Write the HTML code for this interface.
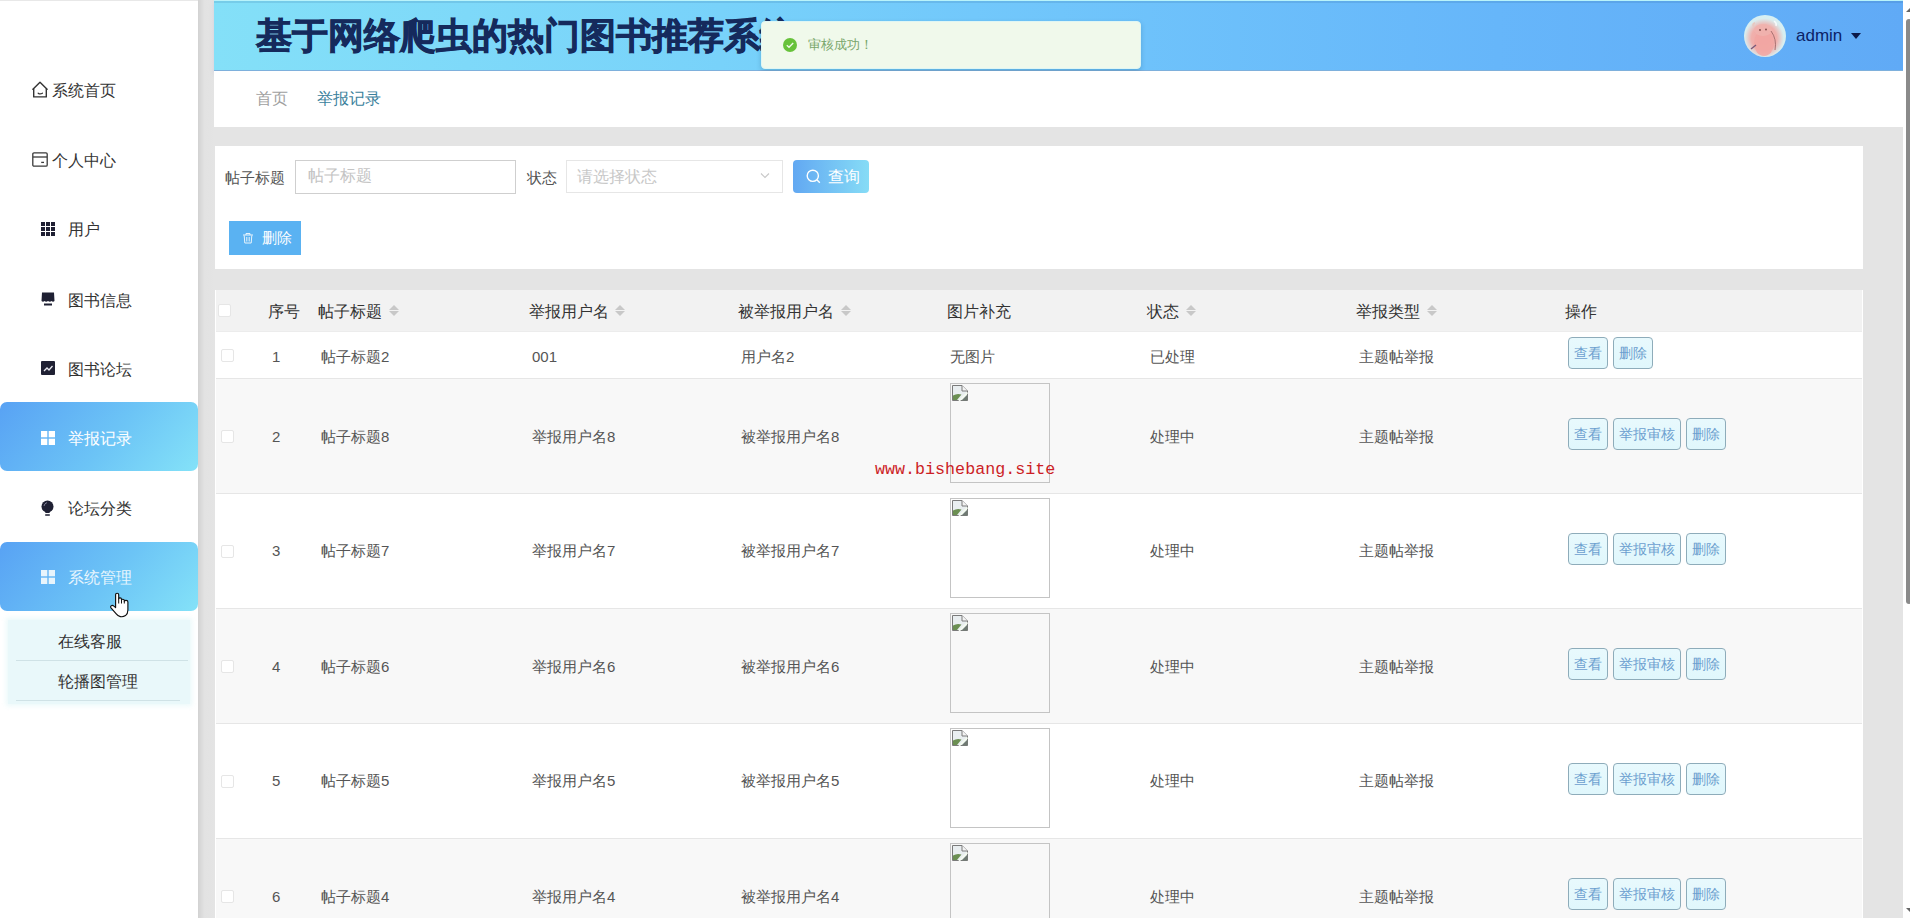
<!DOCTYPE html>
<html><head><meta charset="utf-8">
<style>
*{box-sizing:border-box;margin:0;padding:0}
html,body{width:1910px;height:918px;overflow:hidden;background:#e4e4e4;font-family:"Liberation Sans",sans-serif;color:#333}
.a{position:absolute;white-space:nowrap}
#side{position:absolute;left:0;top:0;width:198px;height:918px;background:#fff;border-top:1px solid #e8e8e8}
#gstrip{position:absolute;left:198px;top:0;width:16px;height:918px;background:linear-gradient(90deg,#d2d2d2,#e2e2e2 40%,#e4e4e4)}
.mi{position:absolute;left:0;width:198px;height:20px;font-size:16px;line-height:20px;color:#333}
.act{position:absolute;left:0;width:198px;height:69px;border-radius:7px;background:linear-gradient(130deg,#58a2f4 0%,#6cc4f6 55%,#84e2f8 100%)}
#header{position:absolute;left:214px;top:0;width:1689px;height:71px;background:linear-gradient(90deg,#84e0f8 0%,#78d2fa 30%,#72c8fb 45%,#66b6fa 76%,#60aaf6 100%);border-top:1px solid #b8f3fb;border-bottom:1px solid #7eb0dc;box-shadow:0 2px 4px rgba(150,150,220,.25)}
#crumb{position:absolute;left:214px;top:71px;width:1690px;height:56px;background:#fff}
.card{position:absolute;left:215px;width:1648px;background:#fff}
.th{position:absolute;top:303px;font-size:16px;line-height:18px;color:#333}
.td{position:absolute;font-size:15px;line-height:18px;color:#555}
.sort{position:absolute;width:10px;height:12px}
.sort:before{content:"";position:absolute;left:0;top:0;border-left:5px solid transparent;border-right:5px solid transparent;border-bottom:5px solid #c8c8c8}
.sort:after{content:"";position:absolute;left:0;top:6px;border-left:5px solid transparent;border-right:5px solid transparent;border-top:5px solid #c8c8c8}
.row{position:absolute;left:216px;width:1646px;border-bottom:1px solid #e6e6e6}
.cb{position:absolute;width:13px;height:13px;border:1px solid #e6e6e6;background:#fff;border-radius:2px}
.btn{position:absolute;height:32px;border:1px solid #8eacba;border-radius:4px;background:linear-gradient(180deg,#e8f9fd,#e0f7fc);font-size:14px;line-height:31px;color:#6c9fcf;text-align:center}
.img{position:absolute;width:100px;height:100px;border:1px solid #c4c4c4}
.bi{position:absolute;left:1px;top:1px;width:16px;height:16px}
</style></head><body>

<div id="side"></div>
<div id="gstrip"></div>

<!-- sidebar menu -->
<svg class="a" style="left:32px;top:81px" width="17" height="17" viewBox="0 0 17 17"><path d="M0.9 8.3 L8 1.2 L15.1 8.3" fill="none" stroke="#333" stroke-width="1.4" stroke-linejoin="round" stroke-linecap="round"/><path d="M1.7 7.6 V15.9 H14.3 V7.6" fill="none" stroke="#333" stroke-width="1.4" stroke-linejoin="round"/><path d="M6.2 12.2 Q8 13.6 10.4 12.2" fill="none" stroke="#333" stroke-width="1.3" stroke-linecap="round"/></svg>
<div class="a mi" style="left:52px;top:81px;width:auto">系统首页</div>

<svg class="a" style="left:32px;top:152px" width="16" height="15" viewBox="0 0 16 15"><rect x="0.8" y="0.8" width="14.4" height="13.4" rx="1.2" fill="none" stroke="#3a3a3a" stroke-width="1.3"/><line x1="1" y1="5" x2="15" y2="5" stroke="#3a3a3a" stroke-width="1.3"/><line x1="9.2" y1="10.4" x2="12" y2="10.4" stroke="#3a3a3a" stroke-width="1.3"/></svg>
<div class="a mi" style="left:52px;top:151px;width:auto">个人中心</div>

<svg class="a" style="left:41px;top:222px" width="14" height="14" viewBox="0 0 14 14" fill="#1f2033"><rect x="0" y="0" width="4" height="4"/><rect x="5" y="0" width="4" height="4"/><rect x="10" y="0" width="4" height="4"/><rect x="0" y="5" width="4" height="4"/><rect x="5" y="5" width="4" height="4"/><rect x="10" y="5" width="4" height="4"/><rect x="0" y="10" width="4" height="4"/><rect x="5" y="10" width="4" height="4"/><rect x="10" y="10" width="4" height="4"/></svg>
<div class="a mi" style="left:68px;top:220px;width:auto">用户</div>

<svg class="a" style="left:41px;top:292px" width="14" height="14" viewBox="0 0 14 14"><path d="M1 0.5 H13 L13.5 9 Q12 10.5 10.5 9 Q9 10.5 7 9 Q5 10.5 3.5 9 Q2 10.5 0.5 9 Z" fill="#1f2033"/><rect x="3" y="11.5" width="8" height="2" fill="#1f2033"/></svg>
<div class="a mi" style="left:68px;top:291px;width:auto">图书信息</div>

<svg class="a" style="left:41px;top:361px" width="14" height="14" viewBox="0 0 14 14"><rect x="0" y="0" width="14" height="14" rx="1" fill="#1f2033"/><path d="M3 10 L6 7 L8 9 L11.5 5" fill="none" stroke="#e8e8f0" stroke-width="1.3"/></svg>
<div class="a mi" style="left:68px;top:360px;width:auto">图书论坛</div>

<div class="act" style="top:402px"></div>
<svg class="a" style="left:41px;top:431px" width="14" height="14" viewBox="0 0 14 14" fill="#fff"><rect x="0" y="0" width="6.3" height="6.3"/><rect x="7.7" y="0" width="6.3" height="6.3"/><rect x="0" y="7.7" width="6.3" height="6.3"/><rect x="7.7" y="7.7" width="6.3" height="6.3"/></svg>
<div class="a mi" style="left:68px;top:429px;width:auto;color:#fff">举报记录</div>

<svg class="a" style="left:41px;top:500px" width="13" height="16" viewBox="0 0 13 16"><circle cx="6.5" cy="6.5" r="6" fill="#1f2033"/><path d="M3.5 10 L9.5 10 L8.5 13 L4.5 13 Z" fill="#1f2033"/><rect x="4" y="14.3" width="5" height="1.5" rx="0.7" fill="#1f2033"/><path d="M3 6 Q3.5 3.2 6 2.6" fill="none" stroke="#8a8aa0" stroke-width="0.9"/></svg>
<div class="a mi" style="left:68px;top:499px;width:auto">论坛分类</div>

<div class="act" style="top:542px"></div>
<svg class="a" style="left:41px;top:570px" width="14" height="14" viewBox="0 0 14 14" fill="#e8f4fc"><rect x="0" y="0" width="6.3" height="6.3"/><rect x="7.7" y="0" width="6.3" height="6.3"/><rect x="0" y="7.7" width="6.3" height="6.3"/><rect x="7.7" y="7.7" width="6.3" height="6.3"/></svg>
<div class="a mi" style="left:68px;top:568px;width:auto;color:#e8f6fd">系统管理</div>

<!-- submenu -->
<div class="a" style="left:8px;top:620px;width:182px;height:84px;background:#e9f8fa;box-shadow:0 0 5px 2px rgba(233,248,250,.9)"></div>
<div class="a mi" style="left:58px;top:632px;width:auto">在线客服</div>
<div class="a" style="left:16px;top:660px;width:172px;height:1px;background:#cfe2e6"></div>
<div class="a mi" style="left:58px;top:672px;width:auto">轮播图管理</div>
<div class="a" style="left:16px;top:700px;width:164px;height:1px;background:#cfe2e6"></div>

<!-- cursor -->
<svg class="a" style="left:110px;top:592px" width="20" height="26" viewBox="0 0 20 26"><path d="M5.6 2.7 Q5.6 1.2 7.15 1.2 Q8.7 1.2 8.7 2.7 V6.8 Q8.7 5.9 10.1 5.9 Q11.5 5.9 11.5 7.3 V8 Q11.5 7.2 12.9 7.2 Q14.3 7.2 14.3 8.6 V9.2 Q14.3 8.3 16.1 8.3 Q17.9 8.3 17.9 10.1 V18 Q17.9 21.8 15.5 23.6 Q13 25.2 10.3 24.6 Q7.8 24 6 21.6 L1 15.8 Q0.2 14.7 1.1 13.9 Q2.4 12.9 3.9 14.1 L5.6 15.6 Z" fill="#fff" stroke="#111" stroke-width="1.15" stroke-linejoin="round"/><line x1="8.7" y1="6.5" x2="8.7" y2="11.5" stroke="#111" stroke-width="1"/><line x1="11.5" y1="8" x2="11.5" y2="11.5" stroke="#111" stroke-width="1"/><line x1="14.3" y1="9" x2="14.3" y2="11.5" stroke="#111" stroke-width="1"/></svg>

<!-- header -->
<div id="header"></div>
<div class="a" style="left:214px;top:1px;width:1689px;height:2px;background:rgba(30,80,130,.13)"></div>
<div class="a" style="left:256px;top:16px;font-size:36px;line-height:40px;font-weight:bold;color:#172a5c;-webkit-text-stroke:0.9px #152a5c;letter-spacing:0px">基于网络爬虫的热门图书推荐系统</div>

<!-- toast -->
<div class="a" style="left:761px;top:21px;width:380px;height:48px;background:#f0f9eb;border:1px solid #def6f4;border-radius:4px;box-shadow:0 2px 5px rgba(0,60,90,.22)"></div>
<svg class="a" style="left:783px;top:38px" width="14" height="14" viewBox="0 0 14 14"><circle cx="7" cy="7" r="7" fill="#67c23a"/><path d="M3.8 7.2 L6 9.2 L10.2 4.9" fill="none" stroke="#f0f9eb" stroke-width="1.4"/></svg>
<div class="a" style="left:808px;top:37px;font-size:13px;line-height:15px;color:#78a66a">审核成功！</div>

<!-- avatar -->
<svg class="a" style="left:1744px;top:15px" width="42" height="42" viewBox="0 0 42 42"><defs><clipPath id="cc"><circle cx="21" cy="21" r="21"/></clipPath><radialGradient id="ag" cx="48%" cy="55%" r="55%"><stop offset="0" stop-color="#f2a4a4"/><stop offset="0.55" stop-color="#f0b0ac"/><stop offset="0.85" stop-color="#d8eef0"/><stop offset="1" stop-color="#d6f0f4"/></radialGradient></defs><g clip-path="url(#cc)"><rect width="42" height="42" fill="url(#ag)"/><ellipse cx="20" cy="28" rx="10" ry="13" fill="#f2a6a2" opacity="0.85"/><ellipse cx="19" cy="15" rx="9" ry="6" fill="#f0b2ae" opacity="0.9"/><path d="M10 12 Q8 9 11 8" stroke="#e8c8c0" stroke-width="2" fill="none"/><circle cx="16" cy="15" r="0.9" fill="#7a4444"/><circle cx="22" cy="14.5" r="0.9" fill="#7a4444"/><path d="M27 16 Q33 24 31 35" stroke="#a87070" stroke-width="1" fill="none"/><path d="M7 34 L12 30" stroke="#7a5a7a" stroke-width="1.4"/><path d="M30 6 Q33 8 32 11" stroke="#fff" stroke-width="1.5" fill="none" opacity="0.8"/></g></svg>
<div class="a" style="left:1796px;top:26px;font-size:17px;line-height:20px;color:#0c2266">admin</div>
<div class="a" style="left:1851px;top:33px;width:0;height:0;border-left:5px solid transparent;border-right:5px solid transparent;border-top:6px solid #0c1a4a"></div>

<!-- breadcrumb -->
<div id="crumb"></div>
<div class="a" style="left:256px;top:90px;font-size:16px;line-height:18px;color:#a0a0a0">首页</div>
<div class="a" style="left:317px;top:90px;font-size:16px;line-height:18px;color:#3b7f9c">举报记录</div>

<!-- search card -->
<div class="card" style="top:146px;height:123px"></div>
<div class="a" style="left:225px;top:169px;font-size:15px;line-height:17px;color:#555">帖子标题</div>
<div class="a" style="left:295px;top:160px;width:221px;height:34px;border:1px solid #cfcfcf;background:#fff"></div>
<div class="a" style="left:308px;top:167px;font-size:16px;line-height:17px;color:#c4c4c4">帖子标题</div>
<div class="a" style="left:527px;top:169px;font-size:15px;line-height:17px;color:#555">状态</div>
<div class="a" style="left:566px;top:160px;width:217px;height:33px;border:1px solid #e6e6e6;background:#fff"></div>
<div class="a" style="left:577px;top:168px;font-size:16px;line-height:17px;color:#c8c8c8">请选择状态</div>
<svg class="a" style="left:760px;top:172px" width="10" height="8" viewBox="0 0 10 8"><path d="M1 1.5 L5 5.5 L9 1.5" fill="none" stroke="#c8c8c8" stroke-width="1.1"/></svg>
<div class="a" style="left:793px;top:160px;width:76px;height:33px;border-radius:4px;background:linear-gradient(90deg,#62a8f2,#86dcf6)"></div>
<svg class="a" style="left:806px;top:169px" width="15" height="15" viewBox="0 0 15 15"><circle cx="6.8" cy="6.8" r="5.6" fill="none" stroke="#fff" stroke-width="1.4"/><line x1="10.8" y1="10.8" x2="13.8" y2="13.8" stroke="#fff" stroke-width="1.4"/></svg>
<div class="a" style="left:828px;top:168px;font-size:16px;line-height:18px;color:#fff">查询</div>

<div class="a" style="left:229px;top:221px;width:72px;height:34px;background:#5ab2f2"></div>
<svg class="a" style="left:242px;top:232px" width="12" height="12" viewBox="0 0 12 12"><path d="M1 3 H11 M4 3 V1.5 H8 V3 M2.2 3.5 L2.8 11 H9.2 L9.8 3.5 M4.8 5 V9.5 M7.2 5 V9.5" fill="none" stroke="#e8f4fc" stroke-width="1"/></svg>
<div class="a" style="left:262px;top:229px;font-size:15px;line-height:17px;color:#fff">删除</div>

<!-- table -->
<div class="card" style="top:290px;height:628px;background:#fff"></div>
<div class="a" style="left:216px;top:290px;width:1646px;height:42px;background:#f2f2f2;border-bottom:1px solid #ececec"></div>
<div class="cb" style="left:218px;top:304px"></div>
<div class="th" style="left:268px">序号</div>
<div class="th" style="left:318px">帖子标题</div><div class="sort" style="left:389px;top:305px"></div>
<div class="th" style="left:529px">举报用户名</div><div class="sort" style="left:615px;top:305px"></div>
<div class="th" style="left:738px">被举报用户名</div><div class="sort" style="left:841px;top:305px"></div>
<div class="th" style="left:947px">图片补充</div>
<div class="th" style="left:1147px">状态</div><div class="sort" style="left:1186px;top:305px"></div>
<div class="th" style="left:1356px">举报类型</div><div class="sort" style="left:1427px;top:305px"></div>
<div class="th" style="left:1565px">操作</div>

<div id="rows"></div>
<div class="row" style="top:332px;height:47px;background:#fff"></div>
<div class="cb" style="left:221px;top:349px"></div>
<div class="td" style="left:272px;top:348px">1</div>
<div class="td" style="left:321px;top:348px">帖子标题2</div>
<div class="td" style="left:532px;top:348px">001</div>
<div class="td" style="left:741px;top:348px">用户名2</div>
<div class="td" style="left:950px;top:348px">无图片</div>
<div class="td" style="left:1150px;top:348px">已处理</div>
<div class="td" style="left:1359px;top:348px">主题帖举报</div>
<div class="btn" style="left:1568px;top:337px;width:40px">查看</div>
<div class="btn" style="left:1613px;top:337px;width:40px">删除</div>
<div class="row" style="top:379px;height:115px;background:#f8f8f8"></div>
<div class="cb" style="left:221px;top:430px"></div>
<div class="td" style="left:272px;top:428px">2</div>
<div class="td" style="left:321px;top:428px">帖子标题8</div>
<div class="td" style="left:532px;top:428px">举报用户名8</div>
<div class="td" style="left:741px;top:428px">被举报用户名8</div>
<div class="img" style="left:950px;top:383px"><svg class="bi" viewBox="0 0 16 16"><path d="M0.5 0.5 H10 L15.5 6 V15.5 H0.5 Z" fill="#e9eef0" stroke="#7a7a7a" stroke-width="1"/><path d="M10 0.5 V6 H15.5" fill="#f4f4f4" stroke="#7a7a7a" stroke-width="1"/><path d="M1 15 V10.5 Q5 8 9.5 9.5 L5 15 Z" fill="#6b8f52"/><path d="M15.5 7.5 L7 16" stroke="#f4fbf0" stroke-width="1.6"/><path d="M9.5 15.5 L15.5 9.5 V15.5 Z" fill="#6f7a72"/></svg></div>
<div class="td" style="left:1150px;top:428px">处理中</div>
<div class="td" style="left:1359px;top:428px">主题帖举报</div>
<div class="btn" style="left:1568px;top:418px;width:40px">查看</div>
<div class="btn" style="left:1613px;top:418px;width:68px">举报审核</div>
<div class="btn" style="left:1686px;top:418px;width:40px">删除</div>
<div class="row" style="top:494px;height:115px;background:#fff"></div>
<div class="cb" style="left:221px;top:545px"></div>
<div class="td" style="left:272px;top:542px">3</div>
<div class="td" style="left:321px;top:542px">帖子标题7</div>
<div class="td" style="left:532px;top:542px">举报用户名7</div>
<div class="td" style="left:741px;top:542px">被举报用户名7</div>
<div class="img" style="left:950px;top:498px"><svg class="bi" viewBox="0 0 16 16"><path d="M0.5 0.5 H10 L15.5 6 V15.5 H0.5 Z" fill="#e9eef0" stroke="#7a7a7a" stroke-width="1"/><path d="M10 0.5 V6 H15.5" fill="#f4f4f4" stroke="#7a7a7a" stroke-width="1"/><path d="M1 15 V10.5 Q5 8 9.5 9.5 L5 15 Z" fill="#6b8f52"/><path d="M15.5 7.5 L7 16" stroke="#f4fbf0" stroke-width="1.6"/><path d="M9.5 15.5 L15.5 9.5 V15.5 Z" fill="#6f7a72"/></svg></div>
<div class="td" style="left:1150px;top:542px">处理中</div>
<div class="td" style="left:1359px;top:542px">主题帖举报</div>
<div class="btn" style="left:1568px;top:533px;width:40px">查看</div>
<div class="btn" style="left:1613px;top:533px;width:68px">举报审核</div>
<div class="btn" style="left:1686px;top:533px;width:40px">删除</div>
<div class="row" style="top:609px;height:115px;background:#f8f8f8"></div>
<div class="cb" style="left:221px;top:660px"></div>
<div class="td" style="left:272px;top:658px">4</div>
<div class="td" style="left:321px;top:658px">帖子标题6</div>
<div class="td" style="left:532px;top:658px">举报用户名6</div>
<div class="td" style="left:741px;top:658px">被举报用户名6</div>
<div class="img" style="left:950px;top:613px"><svg class="bi" viewBox="0 0 16 16"><path d="M0.5 0.5 H10 L15.5 6 V15.5 H0.5 Z" fill="#e9eef0" stroke="#7a7a7a" stroke-width="1"/><path d="M10 0.5 V6 H15.5" fill="#f4f4f4" stroke="#7a7a7a" stroke-width="1"/><path d="M1 15 V10.5 Q5 8 9.5 9.5 L5 15 Z" fill="#6b8f52"/><path d="M15.5 7.5 L7 16" stroke="#f4fbf0" stroke-width="1.6"/><path d="M9.5 15.5 L15.5 9.5 V15.5 Z" fill="#6f7a72"/></svg></div>
<div class="td" style="left:1150px;top:658px">处理中</div>
<div class="td" style="left:1359px;top:658px">主题帖举报</div>
<div class="btn" style="left:1568px;top:648px;width:40px">查看</div>
<div class="btn" style="left:1613px;top:648px;width:68px">举报审核</div>
<div class="btn" style="left:1686px;top:648px;width:40px">删除</div>
<div class="row" style="top:724px;height:115px;background:#fff"></div>
<div class="cb" style="left:221px;top:775px"></div>
<div class="td" style="left:272px;top:772px">5</div>
<div class="td" style="left:321px;top:772px">帖子标题5</div>
<div class="td" style="left:532px;top:772px">举报用户名5</div>
<div class="td" style="left:741px;top:772px">被举报用户名5</div>
<div class="img" style="left:950px;top:728px"><svg class="bi" viewBox="0 0 16 16"><path d="M0.5 0.5 H10 L15.5 6 V15.5 H0.5 Z" fill="#e9eef0" stroke="#7a7a7a" stroke-width="1"/><path d="M10 0.5 V6 H15.5" fill="#f4f4f4" stroke="#7a7a7a" stroke-width="1"/><path d="M1 15 V10.5 Q5 8 9.5 9.5 L5 15 Z" fill="#6b8f52"/><path d="M15.5 7.5 L7 16" stroke="#f4fbf0" stroke-width="1.6"/><path d="M9.5 15.5 L15.5 9.5 V15.5 Z" fill="#6f7a72"/></svg></div>
<div class="td" style="left:1150px;top:772px">处理中</div>
<div class="td" style="left:1359px;top:772px">主题帖举报</div>
<div class="btn" style="left:1568px;top:763px;width:40px">查看</div>
<div class="btn" style="left:1613px;top:763px;width:68px">举报审核</div>
<div class="btn" style="left:1686px;top:763px;width:40px">删除</div>
<div class="row" style="top:839px;height:115px;background:#f8f8f8"></div>
<div class="cb" style="left:221px;top:890px"></div>
<div class="td" style="left:272px;top:888px">6</div>
<div class="td" style="left:321px;top:888px">帖子标题4</div>
<div class="td" style="left:532px;top:888px">举报用户名4</div>
<div class="td" style="left:741px;top:888px">被举报用户名4</div>
<div class="img" style="left:950px;top:843px"><svg class="bi" viewBox="0 0 16 16"><path d="M0.5 0.5 H10 L15.5 6 V15.5 H0.5 Z" fill="#e9eef0" stroke="#7a7a7a" stroke-width="1"/><path d="M10 0.5 V6 H15.5" fill="#f4f4f4" stroke="#7a7a7a" stroke-width="1"/><path d="M1 15 V10.5 Q5 8 9.5 9.5 L5 15 Z" fill="#6b8f52"/><path d="M15.5 7.5 L7 16" stroke="#f4fbf0" stroke-width="1.6"/><path d="M9.5 15.5 L15.5 9.5 V15.5 Z" fill="#6f7a72"/></svg></div>
<div class="td" style="left:1150px;top:888px">处理中</div>
<div class="td" style="left:1359px;top:888px">主题帖举报</div>
<div class="btn" style="left:1568px;top:878px;width:40px">查看</div>
<div class="btn" style="left:1613px;top:878px;width:68px">举报审核</div>
<div class="btn" style="left:1686px;top:878px;width:40px">删除</div>
<div class="a" style="left:875px;top:460px;font-family:'Liberation Mono',monospace;font-size:16.7px;line-height:20px;color:#cc1e26">www.bishebang.site</div>
<!-- /rows -->

<!-- scrollbar -->
<div class="a" style="left:1903px;top:0;width:7px;height:918px;background:#fff"></div>
<div class="a" style="left:1906px;top:19px;width:6px;height:585px;background:#8a8a8a;border-radius:3px"></div>
<div class="a" style="left:1906px;top:8px;width:0;height:0;border-left:4px solid transparent;border-right:4px solid transparent;border-bottom:4px solid #666"></div>
<div class="a" style="left:1906px;top:908px;width:0;height:0;border-left:4px solid transparent;border-right:4px solid transparent;border-top:4px solid #666"></div>
</body></html>
